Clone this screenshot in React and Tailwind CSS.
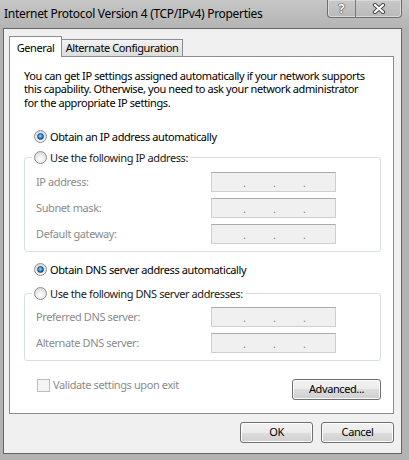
import React from 'react';

const ui = "font-['Segoe_UI','Noto_Sans',sans-serif] text-[11px] tracking-[-0.4px]";

function Radio({ checked }) {
  return (
    <span className="flex h-[13px] w-[13px] shrink-0 items-center justify-center rounded-full border border-[#8f8f8f] bg-[radial-gradient(circle_at_50%_65%,#ffffff_0%,#e8e8e8_55%,#c9c9c9_100%)]">
      {checked && (
        <span className="h-[7px] w-[7px] rounded-full border border-[#1b4a7a] bg-[radial-gradient(circle_at_45%_40%,#a8dcff_0%,#2c83c9_50%,#123f6e_100%)]" />
      )}
    </span>
  );
}

function IpField() {
  return (
    <div className="flex h-[20px] w-[125px] items-end gap-[27px] border border-[#cfcfcf] border-t-[#ababab] bg-[#f0f0f0] pb-[3px] pl-[31px] leading-[10px] text-[#8b8b8b]">
      <span className="w-[3px]">.</span>
      <span className="w-[3px]">.</span>
      <span className="w-[3px]">.</span>
    </div>
  );
}

function AddrRow({ label }) {
  return (
    <div className="flex h-[20px] items-center">
      <span className="w-[175px] text-[#8b8b8b]">{label}</span>
      <IpField />
    </div>
  );
}

function Group({ label, rows, first }) {
  return (
    <fieldset className={`ml-[14px] mr-[12px] rounded-[3px] border border-[#d5dfe5] pb-[7px] pl-[11px] ${first ? 'mt-[5px]' : 'mt-[8px]'}`}>
      <legend className="ml-[-4px] px-[2px]">
        <span className="flex h-[16px] items-center gap-[3px]">
          <Radio />
          <span>{label}</span>
        </span>
      </legend>
      <div className={`flex flex-col gap-[6px] ${first ? 'mt-[6px]' : 'mt-[5px]'}`}>
        {rows.map((r) => (
          <AddrRow key={r} label={r} />
        ))}
      </div>
    </fieldset>
  );
}

function WinButton({ children, className = '' }) {
  return (
    <button className={`flex h-[21px] items-center justify-center rounded-[3px] border border-[#707070] bg-[linear-gradient(to_bottom,#f2f2f2_0%,#ebebeb_50%,#dddddd_50%,#cfcfcf_100%)] text-black shadow-[inset_0_0_0_1px_#fcfcfc] ${className}`}>
      {children}
    </button>
  );
}

export default function App() {
  return (
    <div className={`${ui} flex h-[460px] w-[409px] flex-col bg-[#b3b3b3] text-[#1a1a1a]`}>
      {/* title bar */}
      <div className="flex h-[28px] shrink-0 items-start justify-between bg-[linear-gradient(to_bottom,#c6c6c6,#b4b4b4)] pr-[7px]">
        <span className="pl-[4px] pt-[6px] text-[12px] leading-[16px] tracking-[-0.3px] text-black">
          Internet Protocol Version 4 (TCP/IPv4) Properties
        </span>
        <div className="flex h-[18px] w-[75px] overflow-hidden rounded-b-[4px] border border-t-0 border-[#6f6f6f] bg-[linear-gradient(to_bottom,#c9c9c9,#b9b9b9)] shadow-[inset_0_0_0_1px_#dadada]">
          <div className="flex w-[28px] items-center justify-center border-r border-[#7a7a7a] text-[13px] font-bold leading-none text-white [text-shadow:0_0_1px_#333,0_0_1px_#333,0_0_1px_#333]">
            ?
          </div>
          <div className="flex flex-1 items-center justify-center">
            <svg width="14" height="11" viewBox="0 0 14 11">
              <path d="M3 2 L11 9 M11 2 L3 9" stroke="#4a4a4a" strokeWidth="4.2" strokeLinecap="round" />
              <path d="M3 2 L11 9 M11 2 L3 9" stroke="#ffffff" strokeWidth="2.2" strokeLinecap="round" />
            </svg>
          </div>
        </div>
      </div>

      {/* client area */}
      <div className="ml-[3px] mr-[7px] flex h-[426px] shrink-0 flex-col border border-[#656565] bg-[#f0f0f0] px-[5px] pr-[7px] pt-[7px]">
        {/* tabs */}
        <div className="relative z-10 -mb-px flex h-[21px] items-end">
          <div className="flex h-[21px] w-[53px] items-start justify-center border border-b-0 border-[#898c95] bg-white pt-[3px] text-black">
            General
          </div>
          <div className="-ml-px flex h-[18px] w-[122px] items-center justify-center whitespace-nowrap border border-[#898c95] bg-[linear-gradient(to_bottom,#f3f3f3,#dcdcdc)] text-black">
            Alternate Configuration
          </div>
        </div>

        {/* panel */}
        <div className="flex flex-col border border-[#898c95] bg-white pb-[13px] pt-[12px]">
          <p className="pl-[14px] pr-[22px] leading-[13.3px] text-black">
            You can get IP settings assigned automatically if your network supports this capability. Otherwise, you need to ask your network administrator for the appropriate IP settings.
          </p>

          <div className="ml-[24px] mt-[20px] flex h-[16px] items-center gap-[3px] text-black">
            <Radio checked />
            <span>Obtain an IP address automatically</span>
          </div>

          <Group first label="Use the following IP address:" rows={['IP address:', 'Subnet mask:', 'Default gateway:']} />

          <div className="ml-[24px] mt-[10px] flex h-[16px] items-center gap-[3px] text-black">
            <Radio checked />
            <span>Obtain DNS server address automatically</span>
          </div>

          <Group label="Use the following DNS server addresses:" rows={['Preferred DNS server:', 'Alternate DNS server:']} />

          <div className="ml-[27px] mr-[12px] mt-[18px] flex items-start justify-between">
            <div className="flex h-[13px] items-center gap-[3px]">
              <span className="h-[13px] w-[13px] border border-[#bdbdbd] bg-[#f4f4f4]" />
              <span className="text-[#8b8b8b]">Validate settings upon exit</span>
            </div>
            <WinButton className="w-[89px]">Advanced...</WinButton>
          </div>
        </div>

        {/* dialog buttons */}
        <div className="mt-[8px] flex justify-end gap-[8px]">
          <WinButton className="w-[73px]">OK</WinButton>
          <WinButton className="w-[73px]">Cancel</WinButton>
        </div>
      </div>
    </div>
  );
}
